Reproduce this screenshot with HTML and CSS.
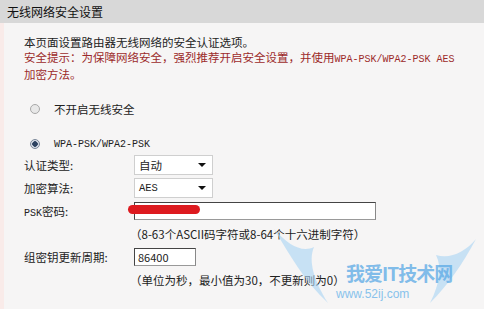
FILE: index.html
```html
<!DOCTYPE html>
<html lang="zh-CN">
<head>
  <meta charset="UTF-8">
  <title>无线网络安全设置</title>
  <link rel="stylesheet" href="styles.css">
</head>
<body>
<div class="header">无线网络安全设置</div>
<div class="panel">
  <p class="intro">本页面设置路由器无线网络的安全认证选项。<br>
    <span class="warn">安全提示：为保障网络安全，强烈推荐开启安全设置，并使用<span class="mono">WPA-PSK/WPA2-PSK AES</span><br>加密方法。</span></p>

  <div class="radio-row first"><span class="radio"></span>不开启无线安全</div>
  <div class="radio-row second"><span class="radio on"></span><span class="mono">WPA-PSK/WPA2-PSK</span></div>

  <div class="row"><span class="label">认证类型:</span>
    <span class="select">自动<i class="arrow"></i></span></div>
  <div class="row"><span class="label">加密算法:</span>
    <span class="select mono">AES<i class="arrow"></i></span></div>
  <div class="row"><span class="label"><span class="mono">PSK</span>密码:</span>
    <span class="field wide"><i class="scribble"></i></span></div>
  <div class="row hint">（8-63个ASCII码字符或8-64个十六进制字符）</div>
  <div class="row"><span class="label">组密钥更新周期:</span>
    <span class="field short">86400</span></div>
  <div class="row hint">（单位为秒，最小值为30，不更新则为0）</div>

  <div class="watermark">
    <svg width="210" height="80" viewBox="0 0 210 80">
      <path d="M4 4 C20 30 34 56 58 78 C44 56 38 36 44 22 C32 28 18 20 4 4Z" fill="#a8d4f3" opacity="0.6"/>
      <path d="M206 14 C192 40 178 60 160 78 C170 58 172 42 166 30 C180 34 194 28 206 14Z" fill="#a8d4f3" opacity="0.6"/>
    </svg>
    <span class="wm-title">我爱IT技术网</span>
    <span class="wm-url">www.52ij.com</span>
  </div>
</div>
</body>
</html>
```

FILE: styles.css
```css
body { margin: 0; background: #f4f4f4; color: #222;
  font-family: "Noto Sans CJK SC", "Liberation Sans", sans-serif; font-size: 11.5px; }
.header { height: 23px; line-height: 23px; padding-left: 7px; background: #d8d8d8;
  font-size: 12px; color: #111; }
.panel { position: relative; height: 286px; padding-left: 20px;
  border-left: 4px solid #f9ebe9; background: #f6f5f5; overflow: hidden; }
.intro { margin: 0; padding-top: 12px; line-height: 15px; }
.warn  { color: #9c2a2a; }
.mono  { font-family: "Liberation Mono", "DejaVu Sans Mono", monospace; font-size: 10px; }

.radio-row { display: flex; align-items: center; height: 18px; padding-left: 6px; }
.radio-row.first  { margin-top: 18px; }
.radio-row.second { margin-top: 17px; }
.radio { width: 8px; height: 8px; margin-right: 14px; border-radius: 50%;
  border: 1px solid #a8a8a8; background: #e8e8e8; box-sizing: content-box; }
.radio.on { background: radial-gradient(circle, #2d4260 0 2.5px, #d8dde6 3px); border-color: #7a8799; }

.row   { display: flex; align-items: center; height: 23px; }
.label { width: 110px; }
.select { position: relative; display: flex; align-items: center; width: 73px; height: 18px;
  padding-left: 4px; background: #fff; border: 1px solid #cfcfcf; }
.select.mono { font-size: 10.5px; }
.arrow { position: absolute; right: 6px; top: 7px; width: 0; height: 0;
  border-left: 4px solid transparent; border-right: 4px solid transparent; border-top: 4px solid #111; }
.field { position: relative; display: flex; align-items: center; height: 16px; padding-left: 3px;
  background: #fff; border: 1px solid #444; border-right-color: #888; border-bottom-color: #999; }
.field.wide  { width: 237px; }
.field.short { width: 57px; font-size: 11px; }
.scribble { position: absolute; left: -7px; top: 2px; width: 72px; height: 9px;
  border-radius: 5px; background: #dd1a1f; }
.hint { padding-left: 106px; }

.watermark { position: absolute; right: 4px; bottom: 4px; width: 210px; height: 80px; }
.watermark svg { position: absolute; left: 0; top: 0; }
.wm-title { position: absolute; left: 76px; top: 34px; font-size: 19px; font-weight: bold;
  color: #5aa9e6; opacity: 0.75; letter-spacing: -1px; }
.wm-url { position: absolute; left: 66px; top: 62px; font-size: 12px; color: #6db5ea; opacity: 0.8;
  font-family: "Liberation Sans", sans-serif; }
```
